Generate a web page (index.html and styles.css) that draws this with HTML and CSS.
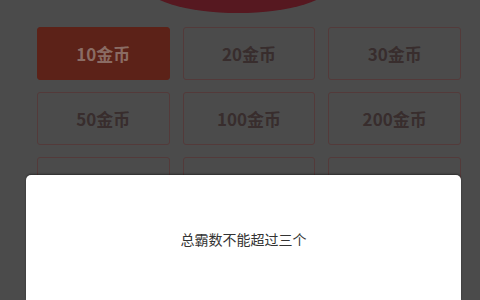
FILE: index.html
```html
<!DOCTYPE html>
<html lang="zh">
<head>
    <meta charset="UTF-8">
    <meta name="viewport" content="width=device-width, initial-scale=1.0">
    <title>金币</title>
    <link rel="stylesheet" href="styles.css">
</head>
<body>
    <div class="page">
        <div class="top-badge"></div>
        <div class="coin-grid">
            <div class="coin active">10金币</div>
            <div class="coin">20金币</div>
            <div class="coin">30金币</div>
            <div class="coin">50金币</div>
            <div class="coin">100金币</div>
            <div class="coin">200金币</div>
            <div class="coin"></div>
            <div class="coin"></div>
            <div class="coin"></div>
        </div>
    </div>

    <!-- 弹窗 -->
    <div class="dialog">
        <p class="dialog-text">总霸数不能超过三个</p>
    </div>
</body>
</html>
```

FILE: styles.css
```css
body {
    margin: 0;
    background-color: #4b4b4b;
    font-family: "Noto Sans CJK SC", "Noto Sans", sans-serif;
}

.page {
    width: 480px;
    height: 300px;
    overflow: hidden;
}

.top-badge {
    width: 190px;
    height: 60px;
    margin: -47px 0 0 143px;
    background-color: #561820;
    border-radius: 50%;
}

.coin-grid {
    display: grid;
    grid-template-columns: repeat(3, 1fr);
    grid-auto-rows: 53px;
    gap: 12px 13px;
    width: 424px;
    margin: 14px 0 0 37px;
}

.coin {
    display: flex;
    align-items: center;
    justify-content: center;
    border: 1px solid #533a3a;
    border-radius: 3px;
    color: #382d2d;
    font-size: 17px;
    font-weight: bold;
}

.coin.active {
    background-color: #5c2218;
    border-color: #5c2218;
    color: #8a6c64;
}

.dialog {
    position: absolute;
    left: 26px;
    top: 175px;
    width: 435px;
    height: 125px;
    background-color: #fff;
    border-radius: 5px 5px 0 0;
    box-shadow: 0 -1px 2px rgba(0, 0, 0, 0.4);
}

.dialog-text {
    margin: 54px 0 0;
    text-align: center;
    font-size: 14px;
    color: #333;
}
```
